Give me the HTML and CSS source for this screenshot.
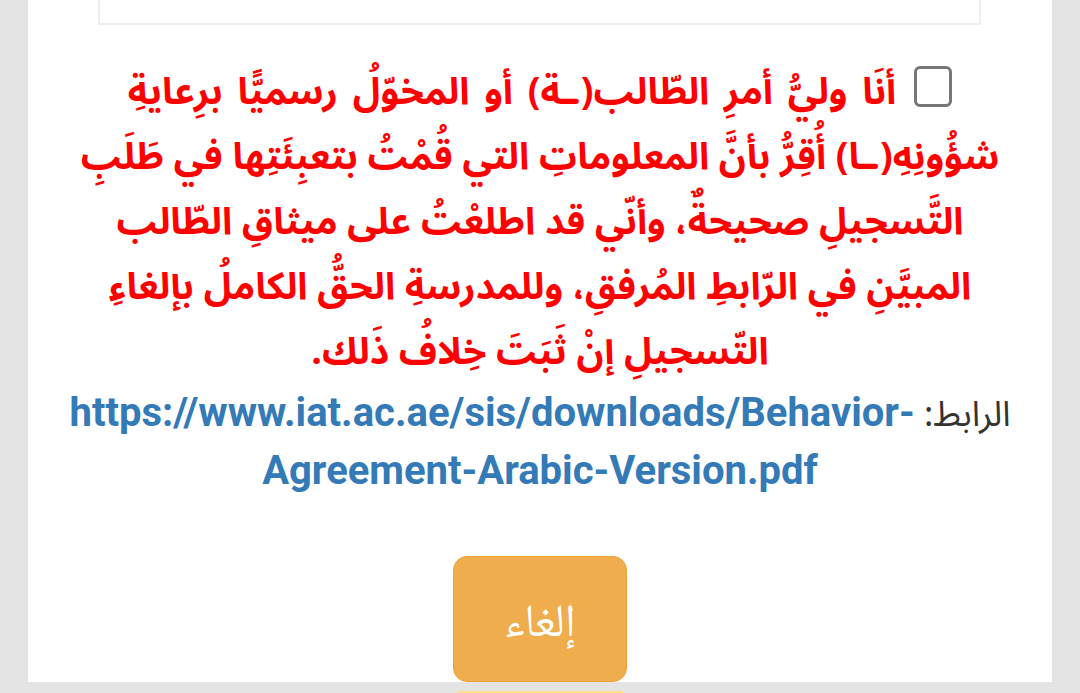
FILE: index.html
```html
<!DOCTYPE html>
<html lang="ar" dir="rtl">
<head>
<meta charset="utf-8">
<link rel="stylesheet" href="styles.css">
</head>
<body>
<div class="panel">
  <div class="topbox"></div>
  <p class="agree"><span class="check"></span><span class="first">أنَا وليُّ أمرِ الطّالب(ـة) أو المخوّلُ رسميًّا برِعايةِ</span><br>شؤُونِهِ(ـا) أُقِرُّ بأنَّ المعلوماتِ التي قُمْتُ بتعبِئَتِها في طَلَبِ<br>التَّسجيلِ صحيحةٌ، وأنّي قد اطلعْتُ على ميثاقِ الطّالب<br>المبيَّنِ في الرّابطِ المُرفقِ، وللمدرسةِ الحقُّ الكاملُ بإلغاءِ<br>التّسجيلِ إنْ ثَبَتَ خِلافُ ذَلك.</p>
  <p class="linkline"><span class="label">الرابط: </span><a class="url" dir="ltr" href="#">https://www.iat.ac.ae/sis/downloads/Behavior-Agreement-Arabic-Version.pdf</a></p>
  <div class="actions"><button class="cancel" type="button">إلغاء</button></div>
</div>
<div class="below"><span class="peek"></span></div>
</body>
</html>
```

FILE: styles.css
```css
html, body {
  margin: 0;
  padding: 0;
  background: #e4e4e4;
  height: 693px;
  overflow: hidden;
}
.panel {
  width: 1024px;
  height: 682px;
  margin-right: 28px;
  background: #ffffff;
  display: flex;
  flex-direction: column;
  box-sizing: border-box;
}
.topbox {
  height: 23px;
  margin: 0 71px 0 70px;
  border: 2px solid #eeeeee;
  border-top: 0;
  background: #ffffff;
}
.agree {
  margin: 35px 0 0 0;
  padding: 0 20px;
  text-align: center;
  white-space: nowrap;
  color: #ff0000;
  font-family: "Noto Sans Arabic", "Noto Naskh Arabic", "DejaVu Sans", sans-serif;
  font-weight: bold;
  font-size: 37.5px;
  line-height: 65px;
}
.first {
  word-spacing: 5px;
}
.check {
  display: inline-block;
  width: 32px;
  height: 35px;
  border: 3px solid #777777;
  border-radius: 6px;
  margin-left: 18px;
  vertical-align: -3px;
  background: #ffffff;
}
.linkline {
  margin: 0;
  padding: 0 30px;
  text-align: center;
  font-size: 35px;
  line-height: 56px;
}
.label {
  color: #333333;
  font-family: "Noto Sans Arabic", "DejaVu Sans", sans-serif;
}
.url {
  color: #337ab7;
  font-family: Roboto, "Liberation Sans", sans-serif;
  font-size: 40px;
  font-weight: bold;
  text-decoration: none;
  unicode-bidi: isolate;
}
.actions {
  margin-top: auto;
  display: flex;
  justify-content: center;
}
.cancel {
  width: 174px;
  height: 126px;
  background: #f0ad4e;
  border: 1px solid #eea236;
  border-radius: 14px;
  color: #ffffff;
  font-family: "Noto Naskh Arabic", "Noto Sans Arabic", "DejaVu Sans", sans-serif;
  font-size: 46px;
  padding: 14px 0 0 0;
}
.below {
  height: 11px;
  display: flex;
  justify-content: center;
}
.peek {
  width: 166px;
  height: 2px;
  margin-top: 9px;
  background: #ffe08a;
}
```
